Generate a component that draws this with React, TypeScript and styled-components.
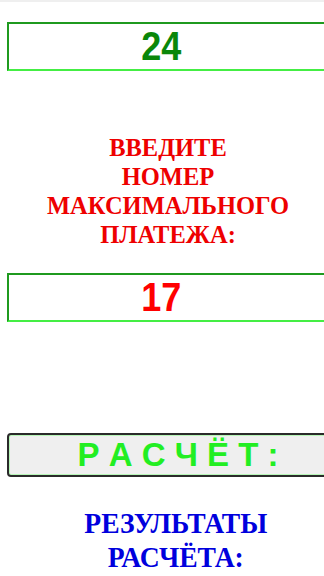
import styled, { createGlobalStyle } from "styled-components";

const Global = createGlobalStyle`
  html, body {
    margin: 0;
    padding: 0;
    background: #ffffff;
    overflow: hidden;
  }
  #root {
    width: 324px;
    overflow: hidden;
  }
`;

const Page = styled.div`
  width: 324px;
  height: 576px;
  border-top: 2px solid #efefef;
  box-sizing: border-box;
  display: flex;
  flex-direction: column;
  overflow: hidden;
`;

const NumberBox = styled.div<{ $color: string; $top: number }>`
  margin: ${(p) => p.$top}px 0 0 7px;
  width: 340px;
  height: 49px;
  flex-shrink: 0;
  box-sizing: border-box;
  border-style: solid;
  border-width: 2px;
  border-color: #1f9a1f #44ee44 #44ee44 #1f9a1f;
  padding-right: 32px;
  display: flex;
  align-items: center;
  justify-content: center;
  font-family: "Liberation Sans", Arial, sans-serif;
  font-weight: 700;
  font-size: 40px;
  color: ${(p) => p.$color};
`;

const Digits = styled.span`
  display: inline-block;
  transform: scaleX(0.9);
`;

const Heading = styled.div<{
  $color: string;
  $top: number;
  $shift: number;
  $size: number;
  $lh: number;
  $scale: number;
}>`
  margin-top: ${(p) => p.$top}px;
  padding-left: ${(p) => p.$shift}px;
  text-align: center;
  font-family: "Liberation Serif", "Times New Roman", serif;
  font-weight: 700;
  font-size: ${(p) => p.$size}px;
  line-height: ${(p) => p.$lh}px;
  color: ${(p) => p.$color};
  transform: scaleX(${(p) => p.$scale});
`;

const CalcButton = styled.div`
  margin: 111px 0 0 7px;
  width: 340px;
  height: 44px;
  flex-shrink: 0;
  box-sizing: border-box;
  border: 2px solid #2a2a2a;
  border-radius: 4px;
  background: #efefef;
  box-shadow: inset 0 0 0 1px #b8f5b8;
  padding-left: 2px;
  display: flex;
  align-items: center;
  justify-content: center;
  font-family: "Liberation Sans", Arial, sans-serif;
  font-weight: 700;
  font-size: 33px;
  color: #22ee22;
  white-space: pre;
`;

export default function App() {
  return (
    <>
      <Global />
      <Page>
        <NumberBox $color="#0a870a" $top={20}>
          <Digits>24</Digits>
        </NumberBox>
        <Heading $color="#ee0000" $top={62} $shift={12} $size={24.5} $lh={29} $scale={1}>
          ВВЕДИТЕ
          <br />
          НОМЕР
          <br />
          МАКСИМАЛЬНОГО
          <br />
          ПЛАТЕЖА:
        </Heading>
        <NumberBox $color="#ff0000" $top={24}>
          <Digits>17</Digits>
        </NumberBox>
        <CalcButton>Р А С Ч Ё Т :</CalcButton>
        <Heading $color="#0000dd" $top={29} $shift={30} $size={30} $lh={34} $scale={0.92}>
          РЕЗУЛЬТАТЫ
          <br />
          РАСЧЁТА:
        </Heading>
      </Page>
    </>
  );
}
